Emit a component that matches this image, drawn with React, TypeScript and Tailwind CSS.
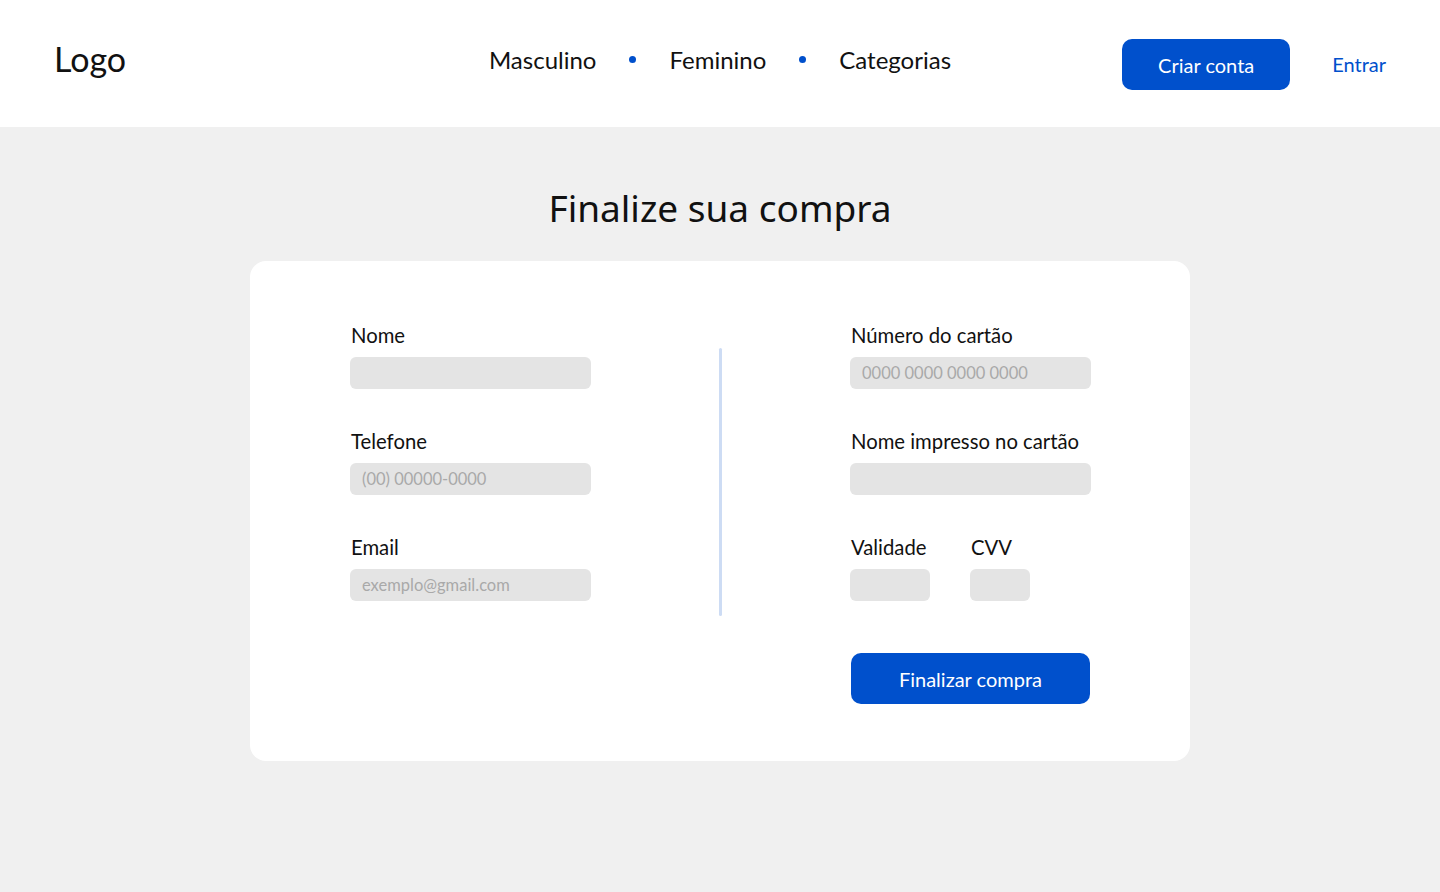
const body = { fontFamily: "Lato, 'Noto Sans', sans-serif" };

function Field({ label, placeholder, width = "w-[241px]" }: { label: string; placeholder?: string; width?: string }) {
  return (
    <div className="flex flex-col">
      <label className="text-[20.3px] leading-[24px] text-[#111] pl-[1px]">{label}</label>
      <div className={`mt-[10px] h-[32px] ${width} rounded-[6px] bg-[#e4e4e4] flex items-center px-3 text-[16.5px] text-[#a9a9a9]`}>
        {placeholder}
      </div>
    </div>
  );
}

export default function App() {
  return (
    <div className="min-h-[892px] bg-[#f0f0f0]" style={body}>
      <header className="h-[127px] bg-white grid grid-cols-[1fr_auto_1fr] items-center px-[54px]">
        <div className="text-[34px] leading-[40px] text-[#111] -mt-[10px]">Logo</div>
        <nav className="flex items-center gap-[33px] text-[24px] text-[#111] -mt-[8px]">
          <span>Masculino</span>
          <span className="w-[7px] h-[7px] rounded-full bg-[#0050cc]"></span>
          <span>Feminino</span>
          <span className="w-[7px] h-[7px] rounded-full bg-[#0050cc]"></span>
          <span>Categorias</span>
        </nav>
        <div className="flex items-center justify-end mt-[2px]">
          <button className="w-[168px] h-[51px] rounded-[10px] bg-[#0050cc] text-white text-[20px]">Criar conta</button>
          <a className="ml-[42px] text-[20px] text-[#0050cc] -mt-[1px]">Entrar</a>
        </div>
      </header>

      <main className="flex flex-col items-center">
        <h1 className="mt-[59px] text-[37px] leading-[44px] text-[#111]" style={{ fontFamily: "'Noto Sans', sans-serif" }}>
          Finalize sua compra
        </h1>
        <div className="mt-[31px] w-[940px] h-[500px] bg-white rounded-[16px] flex items-start pl-[100px] pt-[62px]">
          <div className="flex flex-col gap-[40px] w-[241px]">
            <Field label="Nome" />
            <Field label="Telefone" placeholder="(00) 00000-0000" />
            <Field label="Email" placeholder="exemplo@gmail.com" />
          </div>
          <div className="ml-[128px] mt-[25px] w-[3px] h-[268px] rounded-full bg-[#cddcf4]"></div>
          <div className="ml-[128px] flex flex-col w-[241px]">
            <div className="flex flex-col gap-[40px]">
              <Field label="Número do cartão" placeholder="0000 0000 0000 0000" />
              <Field label="Nome impresso no cartão" />
              <div className="flex gap-[40px]">
                <Field label="Validade" width="w-[80px]" />
                <Field label="CVV" width="w-[60px]" />
              </div>
            </div>
            <button className="mt-[52px] ml-[1px] w-[239px] h-[51px] rounded-[10px] bg-[#0050cc] text-white text-[20px]">
              Finalizar compra
            </button>
          </div>
        </div>
      </main>
    </div>
  );
}
